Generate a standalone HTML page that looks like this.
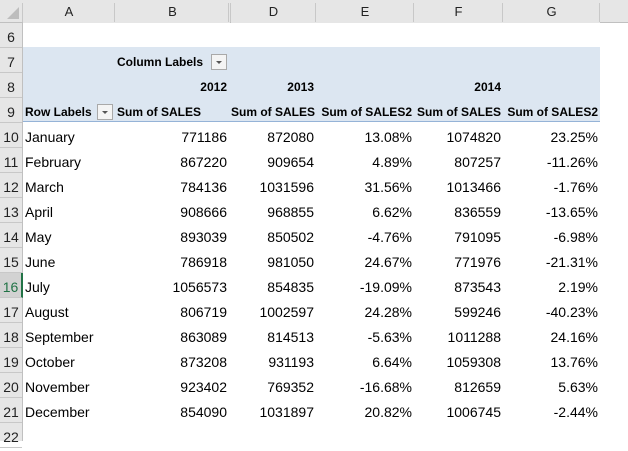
<!DOCTYPE html>
<html><head><style>
body{margin:0;width:628px;height:441px;overflow:hidden;background:#fff;font-family:"Liberation Sans",sans-serif;position:relative}
.a{position:absolute;white-space:nowrap}
.hd{background:#e6e6e6;color:#222;font-size:13px;text-align:center}
.t{font-size:14px;color:#000;height:25px;line-height:30px}
.b{font-weight:bold;font-size:12px}
.r{text-align:right}
.dd{position:absolute;width:14px;height:14px;border:1px solid #a9a9a9;background:#f4f4f4}
.dd:after{content:"";position:absolute;left:4px;top:6px;border-left:3px solid transparent;border-right:3px solid transparent;border-top:3px solid #555}
</style></head><body>
<div class="a" style="left:0;top:0;width:628px;height:22px;background:#e6e6e6;border-bottom:1px solid #c0c0c0"></div>
<svg class="a" style="left:6px;top:6px" width="14" height="14"><polygon points="13,1 13,13 1,13" fill="#bdbdbd"/></svg>
<div class="a hd" style="left:23px;top:0;width:92px;line-height:23px">A</div>
<div class="a hd" style="left:115px;top:0;width:115px;line-height:23px">B</div>
<div class="a hd" style="left:231px;top:0;width:85px;line-height:23px">D</div>
<div class="a hd" style="left:316px;top:0;width:98px;line-height:23px">E</div>
<div class="a hd" style="left:414px;top:0;width:89px;line-height:23px">F</div>
<div class="a hd" style="left:503px;top:0;width:97px;line-height:23px">G</div>
<div class="a" style="left:22px;top:3px;width:1px;height:19px;background:#c8c8c8"></div>
<div class="a" style="left:114px;top:3px;width:1px;height:19px;background:#c8c8c8"></div>
<div class="a" style="left:228px;top:3px;width:1px;height:19px;background:#c8c8c8"></div>
<div class="a" style="left:230px;top:3px;width:1px;height:19px;background:#c8c8c8"></div>
<div class="a" style="left:315px;top:3px;width:1px;height:19px;background:#c8c8c8"></div>
<div class="a" style="left:413px;top:3px;width:1px;height:19px;background:#c8c8c8"></div>
<div class="a" style="left:502px;top:3px;width:1px;height:19px;background:#c8c8c8"></div>
<div class="a" style="left:599px;top:3px;width:1px;height:19px;background:#c8c8c8"></div>
<div class="a" style="left:0;top:23px;width:22px;height:418px;background:#e6e6e6;border-right:1px solid #c0c0c0"></div>
<div id="rh"></div>
<div class="a" style="left:23px;top:47px;width:577px;height:75px;background:#dce6f1"></div>
<div class="a" style="left:23px;top:121px;width:577px;height:1px;background:#95b3d7"></div>
<div class="a t b" style="left:117px;top:47px">Column Labels</div>
<div class="dd" style="left:211px;top:54px"></div>
<div class="a t b r" style="left:115px;top:72px;width:112px">2012</div>
<div class="a t b r" style="left:231px;top:72px;width:83px">2013</div>
<div class="a t b r" style="left:414px;top:72px;width:87px">2014</div>
<div class="a t b" style="left:25px;top:97px">Row Labels</div>
<div class="dd" style="left:97px;top:104px"></div>
<div class="a t b" style="left:117px;top:97px">Sum of SALES</div>
<div class="a t b r" style="left:231px;top:97px;width:83px">Sum of SALES</div>
<div class="a t b r" style="left:316px;top:97px;width:96px">Sum of SALES2</div>
<div class="a t b r" style="left:414px;top:97px;width:87px">Sum of SALES</div>
<div class="a t b r" style="left:503px;top:97px;width:95px">Sum of SALES2</div>
<div id="data"></div>
<script>
var rh='';
for(var i=6;i<=22;i++){var y=23+(i-6)*25;var hl=i==16;
rh+='<div class="a" style="left:0;top:'+y+'px;width:'+(hl?21:22)+'px;height:24px;border-bottom:1px solid #c8c8c8;'+(hl?'background:#d2d2d2;border-right:2px solid #217346;color:#217346;':'color:#222;')+'font-size:14px;line-height:28px;text-align:center">'+i+'</div>';}
document.getElementById('rh').outerHTML=rh;
var d=[["January",771186,872080,"13.08%",1074820,"23.25%"],["February",867220,909654,"4.89%",807257,"-11.26%"],["March",784136,1031596,"31.56%",1013466,"-1.76%"],["April",908666,968855,"6.62%",836559,"-13.65%"],["May",893039,850502,"-4.76%",791095,"-6.98%"],["June",786918,981050,"24.67%",771976,"-21.31%"],["July",1056573,854835,"-19.09%",873543,"2.19%"],["August",806719,1002597,"24.28%",599246,"-40.23%"],["September",863089,814513,"-5.63%",1011288,"24.16%"],["October",873208,931193,"6.64%",1059308,"13.76%"],["November",923402,769352,"-16.68%",812659,"5.63%"],["December",854090,1031897,"20.82%",1006745,"-2.44%"]];
var cols=[[25,0,0],[115,112,1],[231,83,1],[316,96,1],[414,87,1],[503,95,1]];
var h='';
d.forEach(function(r,k){var y=122+k*25;r.forEach(function(v,j){var c=cols[j];
h+='<div class="a t'+(c[2]?' r':'')+'" style="left:'+c[0]+'px;top:'+y+'px;'+(c[1]?'width:'+c[1]+'px':'')+'">'+v+'</div>';});});
document.getElementById('data').outerHTML=h;
</script>
</body></html>
